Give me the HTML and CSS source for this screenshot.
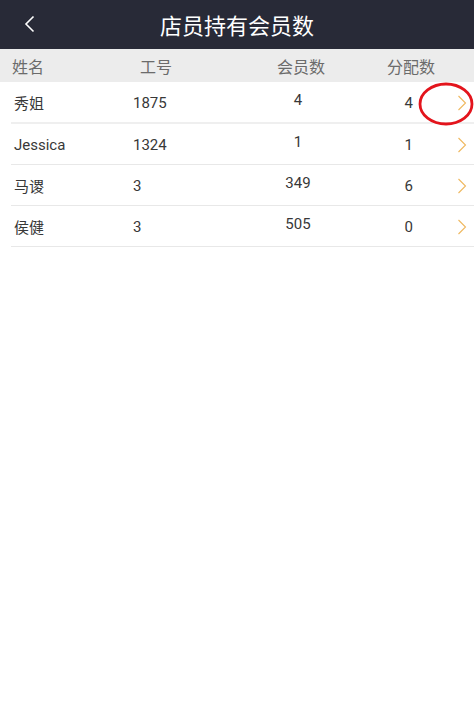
FILE: index.html
```html
<!DOCTYPE html>
<html lang="zh">
<head>
<meta charset="utf-8">
<title>店员持有会员数</title>
<link rel="stylesheet" href="styles.css">
</head>
<body>
<header class="topbar">
  <svg class="back" width="12" height="18" viewBox="0 0 12 18"><polyline points="9.5,1.5 2,9 9.5,16.5" fill="none" stroke="#fff" stroke-width="1.6"/></svg>
  <h1 class="title">店员持有会员数</h1>
</header>
<div class="thead">
  <span>姓名</span><span>工号</span><span>会员数</span><span>分配数</span>
</div>
<div class="list">
  <div class="row first">
    <span class="name">秀姐</span><span class="no">1875</span><span class="cnt">4</span><span class="dist">4</span>
    <svg class="arrow" width="10" height="16" viewBox="0 0 10 16"><polyline points="1.5,1 8.5,8 1.5,15" fill="none" stroke="#efb85f" stroke-width="1.1"/></svg>
    <svg class="mark" width="56" height="44" viewBox="0 0 56 44"><ellipse cx="28" cy="22" rx="26" ry="20" fill="none" stroke="#e3141c" stroke-width="2.8"/></svg>
  </div>
  <div class="row">
    <span class="name">Jessica</span><span class="no">1324</span><span class="cnt">1</span><span class="dist">1</span>
    <svg class="arrow" width="10" height="16" viewBox="0 0 10 16"><polyline points="1.5,1 8.5,8 1.5,15" fill="none" stroke="#efb85f" stroke-width="1.1"/></svg>
  </div>
  <div class="row">
    <span class="name">马谡</span><span class="no">3</span><span class="cnt">349</span><span class="dist">6</span>
    <svg class="arrow" width="10" height="16" viewBox="0 0 10 16"><polyline points="1.5,1 8.5,8 1.5,15" fill="none" stroke="#efb85f" stroke-width="1.1"/></svg>
  </div>
  <div class="row">
    <span class="name">侯健</span><span class="no">3</span><span class="cnt">505</span><span class="dist">0</span>
    <svg class="arrow" width="10" height="16" viewBox="0 0 10 16"><polyline points="1.5,1 8.5,8 1.5,15" fill="none" stroke="#efb85f" stroke-width="1.1"/></svg>
  </div>
</div>
</body>
</html>
```
FILE: styles.css
```css
html, body {
  margin: 0;
  padding: 0;
  background: #fff;
  font-family: Roboto, "Noto Sans CJK SC", sans-serif;
}
.topbar {
  height: 49px;
  background: #282a37;
  display: flex;
  align-items: center;
  position: relative;
}
.back {
  margin-left: 24px;
  margin-top: -1px;
}
.title {
  margin: 0;
  position: absolute;
  left: 0;
  right: 0;
  text-align: center;
  color: #fff;
  font-size: 22px;
  font-weight: 400;
  font-family: "Noto Sans CJK SC", sans-serif;
  line-height: 49px;
}
.thead {
  height: 33px;
  background: #ececec;
  display: grid;
  grid-template-columns: 128px 137px 110px 1fr;
  padding-left: 12px;
  align-items: center;
  font-family: "Noto Sans CJK SC", sans-serif;
  font-size: 16px;
  color: #6b6b6b;
}
.list {
  margin-left: 11px;
}
.row {
  position: relative;
  box-sizing: border-box;
  height: 41px;
  border-bottom: 1px solid #e8e8e8;
  display: grid;
  grid-template-columns: 119px 137px 56px 87px 1fr;
  padding-left: 3px;
  padding-top: 1px;
  align-items: center;
  font-size: 15px;
  color: #383838;
}
.row.first {
  height: 42px;
  border-bottom: 2px solid #efefef;
}
.name {
  font-size: 15px;
}
.cnt {
  text-align: center;
  margin-top: -5px;
}
.dist {
  text-align: right;
}
.arrow {
  margin-left: 44px;
}
.mark {
  position: absolute;
  left: 407px;
  top: 0;
}
```
